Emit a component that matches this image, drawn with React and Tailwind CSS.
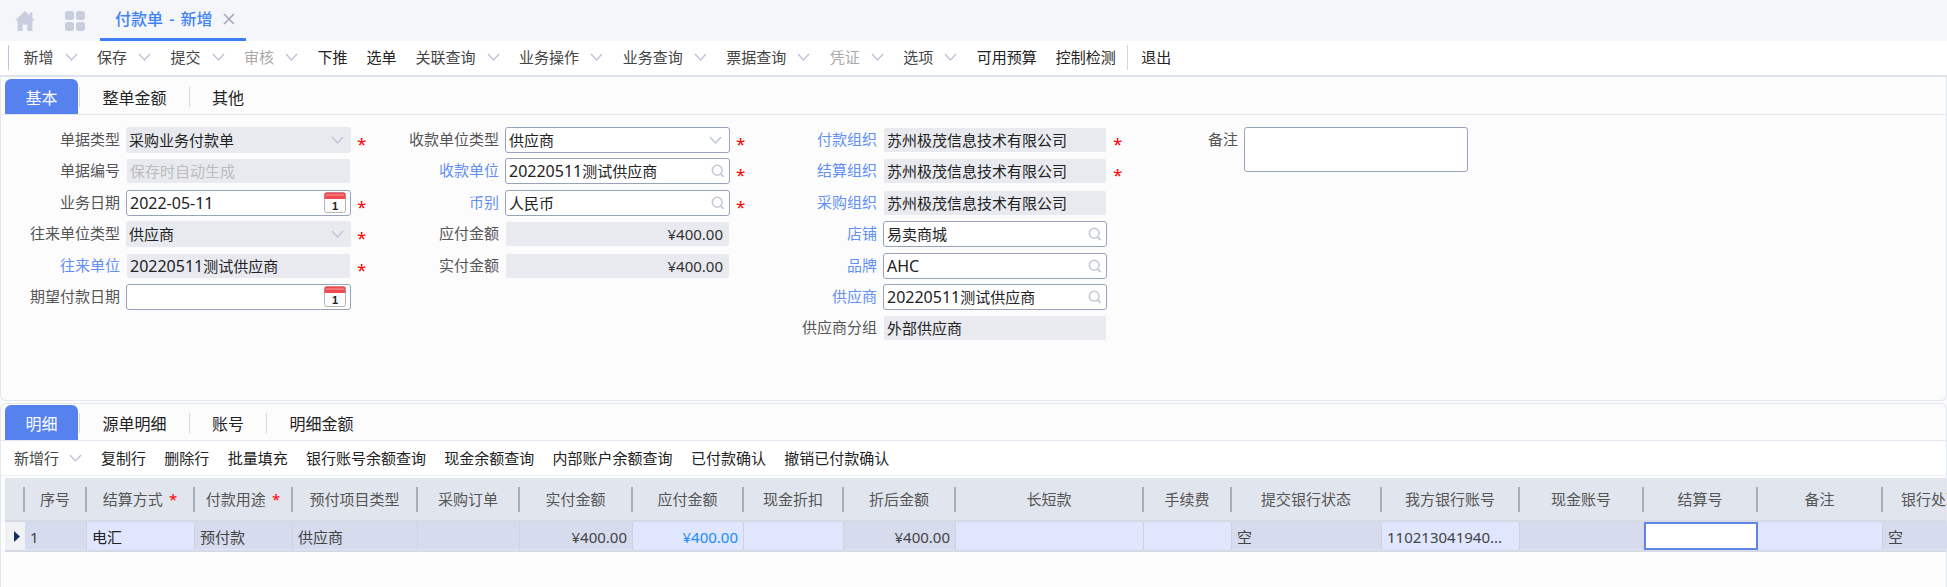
const menu = [
  { t: "新增", c: 1 }, { t: "保存", c: 1 }, { t: "提交", c: 1 }, { t: "审核", c: 1, d: 1 }, { t: "下推" }, { t: "选单" },
  { t: "关联查询", c: 1 }, { t: "业务操作", c: 1 }, { t: "业务查询", c: 1 }, { t: "票据查询", c: 1 }, { t: "凭证", c: 1, d: 1 },
  { t: "选项", c: 1 }, { t: "可用预算" }, { t: "控制检测" },
];

const detailActions = ["复制行", "删除行", "批量填充", "银行账号余额查询", "现金余额查询", "内部账户余额查询", "已付款确认", "撤销已付款确认"];

const columns = [
  { h: "序号", v: "1", ro: 1 },
  { h: "结算方式", req: 1, v: "电汇", dark: 1 },
  { h: "付款用途", req: 1, v: "预付款", ro: 1 },
  { h: "预付项目类型", v: "供应商", ro: 1 },
  { h: "采购订单", ro: 1 },
  { h: "实付金额", v: "¥400.00", ro: 1, right: 1 },
  { h: "应付金额", v: "¥400.00", right: 1, blue: 1 },
  { h: "现金折扣" },
  { h: "折后金额", v: "¥400.00", ro: 1, right: 1 },
  { h: "长短款" },
  { h: "手续费" },
  { h: "提交银行状态", v: "空", ro: 1 },
  { h: "我方银行账号", v: "110213041940..." },
  { h: "现金账号", ro: 1 },
  { h: "结算号", focus: 1 },
  { h: "备注" },
  { h: "银行处理状态", v: "空", ro: 1 },
];

function Chevron({ className = "" }) {
  return (
    <svg width="13" height="8" viewBox="0 0 13 8" fill="none" className={`shrink-0 ${className}`}>
      <path d="M1 1l5.5 6L12 1" stroke="#bcc3d6" strokeWidth="1.3" />
    </svg>
  );
}

function Search() {
  return (
    <svg width="14" height="14" viewBox="0 0 14 14" fill="none" className="shrink-0">
      <circle cx="6.2" cy="6.2" r="4.9" stroke="#c3c8d8" strokeWidth="1.5" />
      <path d="M9.6 9.8l3 3" stroke="#c3c8d8" strokeWidth="1.8" />
    </svg>
  );
}

function Calendar() {
  return (
    <svg width="22" height="21" viewBox="0 0 22 21" className="shrink-0">
      <rect x="0.5" y="0.5" width="21" height="20" rx="2" fill="#fbfbfb" stroke="#b5b5b5" />
      <path d="M0.5 2.5a2 2 0 0 1 2-2h17a2 2 0 0 1 2 2V7H0.5z" fill="#ef4b50" />
      <rect x="2" y="2.5" width="18" height="1" fill="#f79a9c" />
      <text x="11" y="17.5" textAnchor="middle" fontSize="11" fontWeight="700" fill="#222" fontFamily="Liberation Sans, sans-serif">1</text>
    </svg>
  );
}

function Star() {
  return <span className="ml-[6px] w-[8px] translate-y-[4px] text-[17px] leading-[18px] text-[#f00]">*</span>;
}

function Mixed({ value }) {
  return String(value)
    .split(/([0-9A-Za-z-]+)/)
    .map((part, i) => (i % 2 ? <span key={i} className="text-[16px]">{part}</span> : part));
}

function Field({ label, labelW, blue, value, kind, star, right, muted, boxW = "w-[225px]" }) {
  const readonly = kind === "ro" || kind === "roSelect";
  return (
    <div className="flex h-[26px] items-center">
      <span className={`${labelW} shrink-0 -translate-y-[1px] whitespace-nowrap pr-[6px] text-right leading-[24px] ${blue ? "text-[#6390f3]" : "text-[#555]"}`}>{label}</span>
      <div
        className={`${boxW} flex h-[26px] shrink-0 items-center rounded-[3px] pl-[3px] pr-[4px] ${
          readonly ? (kind === "roSelect" ? "bg-[#e8eaef]" : "border border-[#fcfcfd] bg-[#e8eaef]") : "border border-[#98a2bb] bg-white"
        }`}
      >
        <span className={`flex-1 truncate leading-[24px] ${right ? "pr-[2px] text-right text-[#333]" : ""} ${muted ? "text-[#bcbcbc]" : "text-[#222]"}`}>
          {right ? value : <Mixed value={value} />}
        </span>
        {(kind === "select" || kind === "roSelect") && <Chevron className="mr-[3px]" />}
        {kind === "search" && <Search />}
        {kind === "date" && <Calendar />}
      </div>
      {star && <Star />}
    </div>
  );
}

function Tabs({ items }) {
  return (
    <div className="flex h-[36px] items-stretch border-b border-[#e3e7ef] pl-[4px]">
      {items.map((t, i) =>
        i === 0 ? (
          <div key={t} className="flex w-[73px] items-center justify-center rounded-t-[6px] bg-[#5582ef] pt-[3px] text-[16px] text-white">{t}</div>
        ) : (
          <div key={t} className="flex items-center">
            <span className={`h-[20px] w-px bg-[#d3d9e4] ${i === 1 ? "ml-[1px]" : ""}`} />
            <span className="pl-[22.5px] pr-[22px] pt-[3px] text-[16px] text-[#222]">{t}</span>
          </div>
        )
      )}
    </div>
  );
}

export default function App() {
  return (
    <div className="h-[587px] w-[1947px] overflow-hidden bg-[#fcfcfd] text-[15px] [font-family:'Noto_Sans','Noto_Sans_CJK_SC',sans-serif]">
      <header className="flex h-[41px] bg-[#f5f6fa]">
        <svg width="20" height="20" viewBox="0 0 20 20" className="ml-[15px] mt-[11px]">
          <path d="M10 0l4.6 4.4V1.6h2.8v5.5L20 9.6h-2.6V20h-5v-6.5H7.6V20h-5V9.6H0z" fill="#c9cedf" />
        </svg>
        <svg width="20" height="20" viewBox="0 0 20 20" className="ml-[30px] mt-[11px]">
          <rect x="0" y="0" width="9" height="9" rx="2.5" fill="#c9cedf" />
          <rect x="11" y="0" width="9" height="9" rx="2.5" fill="#c9cedf" />
          <rect x="0" y="11" width="9" height="9" rx="2.5" fill="#c9cedf" />
          <rect x="11" y="11" width="9" height="9" rx="2.5" fill="#c9cedf" />
        </svg>
        <div className="ml-[15px] flex h-[41px] w-[146px] items-center border-b-[3px] border-[#3a7ff6] pl-[15px]">
          <span className="whitespace-nowrap text-[16px] font-medium text-[#3f83f5] [word-spacing:2px]">付款单 - 新增</span>
          <svg width="12" height="12" viewBox="0 0 12 12" className="ml-[11px]">
            <path d="M1 1l10 10M11 1L1 11" stroke="#a3aabd" strokeWidth="1.6" />
          </svg>
        </div>
      </header>

      <nav className="flex h-[36px] items-center border-b-2 border-[#dfe3ea] bg-white pb-[2px] pl-[8px]">
        <span className="mr-[5px] h-[25px] w-px bg-[#b9c6e0]" />
        {menu.map((m) => (
          <div key={m.t} className="flex items-center whitespace-nowrap px-[9.5px]">
            <span className={m.d ? "text-[#aaa]" : m.c ? "text-[#444]" : "text-[#222]"}>{m.t}</span>
            {m.c && <Chevron className="ml-[11px] mr-[0.5px]" />}
          </div>
        ))}
        <span className="ml-[2px] h-[25px] w-px bg-[#cfd6e3]" />
        <span className="ml-[13px] text-[#222]">退出</span>
      </nav>

      <section className="h-[324px] rounded-b-[6px] border-x border-b border-[#e3e7ef] pt-[2px]">
        <Tabs items={["基本", "整单金额", "其他"]} />
        <div className="grid grid-cols-[399px_360px_390px_330px] pt-[12px]">
          <div className="flex flex-col gap-[5.4px]">
            <Field labelW="w-[125px]" label="单据类型" value="采购业务付款单" kind="roSelect" star />
            <Field labelW="w-[125px]" label="单据编号" value="保存时自动生成" kind="ro" muted />
            <Field labelW="w-[125px]" label="业务日期" value="2022-05-11" kind="date" star />
            <Field labelW="w-[125px]" label="往来单位类型" value="供应商" kind="roSelect" star />
            <Field labelW="w-[125px]" label="往来单位" blue value="20220511测试供应商" kind="ro" star />
            <Field labelW="w-[125px]" label="期望付款日期" value="" kind="date" />
          </div>
          <div className="flex flex-col gap-[5.4px]">
            <Field labelW="w-[105px]" label="收款单位类型" value="供应商" kind="select" star />
            <Field labelW="w-[105px]" label="收款单位" blue value="20220511测试供应商" kind="search" star />
            <Field labelW="w-[105px]" label="币别" blue value="人民币" kind="search" star />
            <Field labelW="w-[105px]" label="应付金额" value="¥400.00" kind="ro" right />
            <Field labelW="w-[105px]" label="实付金额" value="¥400.00" kind="ro" right />
          </div>
          <div className="flex flex-col gap-[5.4px]">
            <Field labelW="w-[123px]" boxW="w-[224px]" label="付款组织" blue value="苏州极茂信息技术有限公司" kind="ro" star />
            <Field labelW="w-[123px]" boxW="w-[224px]" label="结算组织" blue value="苏州极茂信息技术有限公司" kind="ro" star />
            <Field labelW="w-[123px]" boxW="w-[224px]" label="采购组织" blue value="苏州极茂信息技术有限公司" kind="ro" />
            <Field labelW="w-[123px]" boxW="w-[224px]" label="店铺" blue value="易卖商城" kind="search" />
            <Field labelW="w-[123px]" boxW="w-[224px]" label="品牌" blue value="AHC" kind="search" />
            <Field labelW="w-[123px]" boxW="w-[224px]" label="供应商" blue value="20220511测试供应商" kind="search" />
            <Field labelW="w-[123px]" boxW="w-[224px]" label="供应商分组" value="外部供应商" kind="ro" />
          </div>
          <div className="flex items-start">
            <span className="w-[94px] shrink-0 pr-[6px] text-right leading-[24px] text-[#555]">备注</span>
            <div className="h-[45px] w-[224px] shrink-0 rounded-[3px] border border-[#98a2bb] bg-white" />
          </div>
        </div>
      </section>

      <section className="mt-[2px] h-[185px] rounded-t-[6px] border-x border-t border-[#e3e7ef] pt-[1px]">
        <Tabs items={["明细", "源单明细", "账号", "明细金额"]} />
        <div className="flex h-[35px] items-center border-b border-[#eef0f5] bg-white pl-[13px] text-[#222]">
          <span className="text-[#444]">新增行</span>
          <Chevron className="ml-[10px] mr-[19px]" />
          <div className="flex gap-[18.3px] whitespace-nowrap">
            {detailActions.map((a) => <span key={a}>{a}</span>)}
          </div>
        </div>
        <div className="ml-[4px] mt-[2px]">
          <div className="grid h-[44px] grid-cols-[20px_62px_108px_98px_125px_102px_113px_111px_100px_112px_188px_88px_150px_138px_124px_114px_125px_126px] items-center border-b-2 border-[#d6dae4] bg-[#e1e5ee] text-[#555]">
            <div className="h-[25px] border-r-2 border-[#aaaeb6]" />
            {columns.map((c, i) => (
              <div key={c.h} className={`flex h-[25px] items-center justify-center whitespace-nowrap ${i < 16 ? "border-r-2 border-[#aaaeb6]" : ""}`}>
                {c.h}
                {c.req && <span className="ml-[6px] text-[#f00]">*</span>}
              </div>
            ))}
          </div>
          <div className="grid h-[30px] grid-cols-[20px_62px_108px_98px_125px_102px_113px_111px_100px_112px_188px_88px_150px_138px_124px_114px_125px_126px] border-b-2 border-[#d6dae4] bg-[#dfe6fd]">
            <div className="flex items-center bg-[#f0f2f6] pl-[9px]">
              <svg width="6" height="11" viewBox="0 0 6 11"><path d="M0 0l6 5.5L0 11z" fill="#14305f" /></svg>
            </div>
            {columns.map((c) =>
              c.focus ? (
                <div key={c.h} className="border-2 border-[#5f86e6] bg-white" />
              ) : (
                <div key={c.h} className="border-r border-[#ced3e0]">
                  <div className={`flex h-[27px] items-center overflow-hidden whitespace-nowrap px-[5px] pt-[3px] ${c.ro ? "bg-[#d6dbee]" : ""} ${c.right ? "justify-end" : ""} ${c.blue ? "text-[#1a8cff]" : c.dark ? "text-[#222]" : "text-[#444]"}`}>
                    {c.v}
                  </div>
                </div>
              )
            )}
          </div>
        </div>
      </section>
    </div>
  );
}
